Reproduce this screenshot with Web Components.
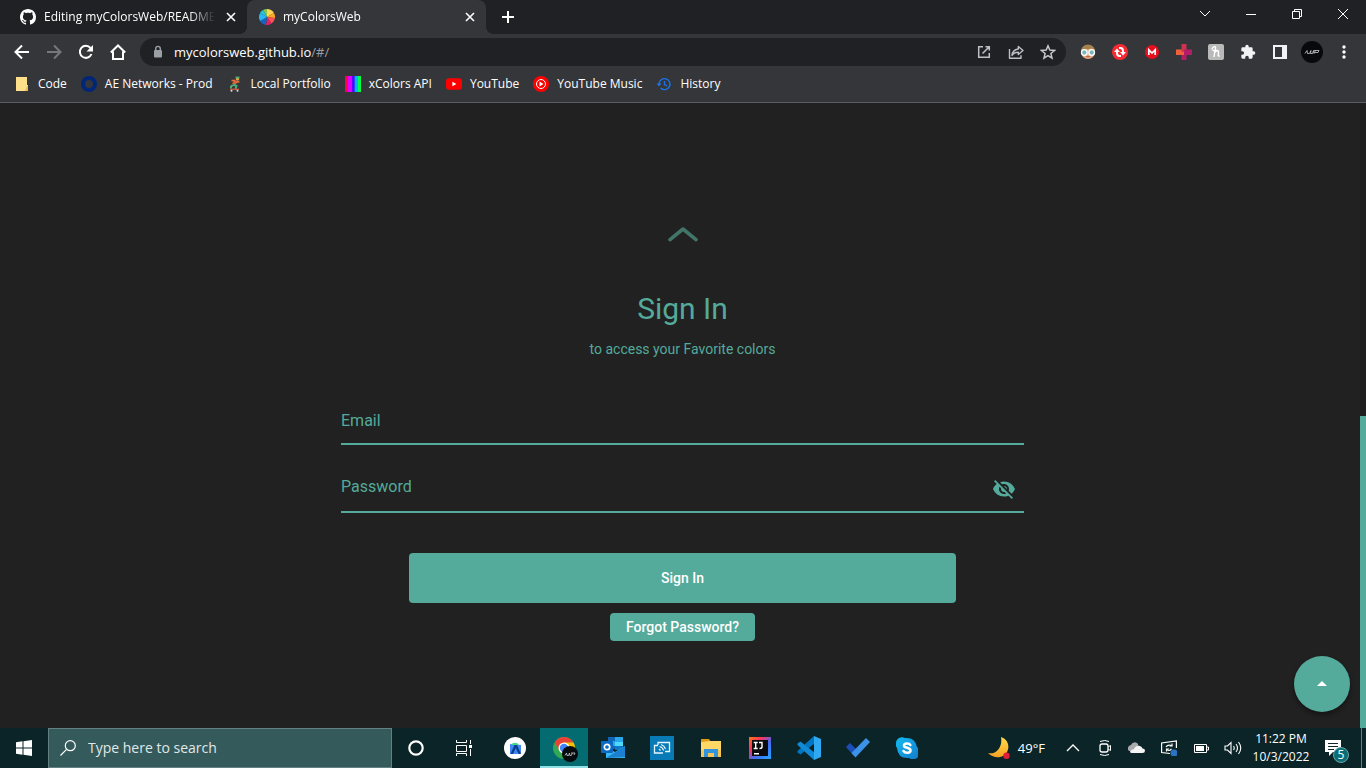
<!DOCTYPE html>
<html lang="en">
<head>
<meta charset="utf-8">
<title>myColorsWeb</title>
<style>
  html, body { height: 100%; margin: 0; }
  body { background: #212121; font-family: "Open Sans", "Noto Sans", sans-serif; font-size: 12px; color: #fff; overflow: hidden; }
</style>
</head>
<body>
<desktop-screen></desktop-screen>
<script>
const ICONS = {
  github: ['0 0 16 16', '<path fill="#fff" d="M8 0C3.58 0 0 3.58 0 8c0 3.54 2.29 6.53 5.47 7.59.4.07.55-.17.55-.38 0-.19-.01-.82-.01-1.49-2.01.37-2.53-.49-2.69-.94-.09-.23-.48-.94-.82-1.13-.28-.15-.68-.52-.01-.53.63-.01 1.08.58 1.23.82.72 1.21 1.87.87 2.33.66.07-.52.28-.87.51-1.07-1.78-.2-3.64-.89-3.64-3.95 0-.87.31-1.59.82-2.15-.08-.2-.36-1.02.08-2.12 0 0 .67-.21 2.2.82.64-.18 1.32-.27 2-.27s1.36.09 2 .27c1.53-1.04 2.2-.82 2.2-.82.44 1.1.16 1.92.08 2.12.51.56.82 1.27.82 2.15 0 3.07-1.87 3.75-3.65 3.95.29.25.54.73.54 1.48 0 1.07-.01 1.93-.01 2.2 0 .21.15.46.55.38A8.01 8.01 0 0 0 16 8c0-4.42-3.58-8-8-8z"/>'],
  wheel: ['-8 -8 16 16', '<g><path fill="#8bc34a" d="M0 0L-4-6.9A8 8 0 0 1 0-8z"/><path fill="#ffd54f" d="M0 0V-8A8 8 0 0 1 6.9-4z"/><path fill="#ffa726" d="M0 0L6.9-4A8 8 0 0 1 8 1z"/><path fill="#ff5252" d="M0 0L8 1A8 8 0 0 1 4.5 6.6z"/><path fill="#e91e63" d="M0 0L4.5 6.6A8 8 0 0 1-1 8z"/><path fill="#1565c0" d="M0 0L-1 8A8 8 0 0 1-6.9 4z"/><path fill="#29b6f6" d="M0 0L-6.9 4A8 8 0 0 1-6.9-4z"/><path fill="#26c6da" d="M0 0L-6.9-4A8 8 0 0 1-4-6.9z"/></g>'],
  close: ['0 0 16 16', '<path stroke="#fff" stroke-width="1.6" d="M4 4l8 8M12 4l-8 8"/>'],
  plus: ['0 0 16 16', '<path stroke="#fff" stroke-width="2" d="M8 2v12M2 8h12"/>'],
  winmenu: ['0 0 16 16', '<path fill="none" stroke="#fff" d="M3 5l5 5 5-5"/>'],
  winmin: ['0 0 16 16', '<path stroke="#fff" d="M3 8.5h10"/>'],
  winmax: ['0 0 16 16', '<path fill="none" stroke="#fff" d="M3.500 5.500h7v7h-7zM5.500 5.500v-2h7v7h-2"/>'],
  winclose: ['0 0 16 16', '<path stroke="#fff" d="M3 3l10 10M13 3L3 13"/>'],
  back: ['0 0 16 16', '<path fill="none" stroke="#fff" stroke-width="2" d="M15 8H2M8 1.500L1.500 8 8 14.500"/>'],
  forward: ['0 0 16 16', '<path fill="none" stroke="#77787b" stroke-width="2" d="M1 8h13M8 1.500L14.500 8 8 14.500"/>'],
  reload: ['0 0 16 16', '<path fill="none" stroke="#fff" stroke-width="2" d="M13.500 10A6 6 0 1 1 12.500 4"/><path fill="#fff" d="M15 1v6.500H8.500z"/>'],
  home: ['0 0 16 16', '<path fill="none" stroke="#fff" stroke-width="2" d="M.8 8.500L8 1.500l7.200 7M3 7.500V15h10V7.500"/>'],
  lock: ['0 0 16 16', '<rect x="4" y="6" width="8" height="7.500" rx="1" fill="#9aa0a6"/><path fill="none" stroke="#9aa0a6" stroke-width="1.400" d="M5.700 7V4.700a2.300 2.300 0 0 1 4.600 0V7"/>'],
  open: ['0 0 16 16', '<path fill="none" stroke="#bdc1c6" stroke-width="1.500" d="M7 2.700H2.700v10.600h10.600V9M9.500 2.700h3.800v3.800M13 3L6.500 9.500"/>'],
  share: ['0 0 16 16', '<path fill="none" stroke="#bdc1c6" stroke-width="1.400" stroke-linejoin="round" d="M1.500 5v9.300h11.500v-3M10.300 2.500L15 6.500l-4.700 4V8.200C7 8.200 5.200 9.200 4 11.500c.4-4 2.700-6 6.300-6.500z"/>'],
  star: ['0 0 16 16', '<path fill="none" stroke="#c4c7ca" stroke-width="1.500" d="M8 1.800l1.800 4.300 4.700.4-3.600 3 1.100 4.600L8 11.600l-4 2.500 1.100-4.600-3.600-3 4.700-.4z"/>'],
  glasses: ['0 0 16 16', '<circle cx="8" cy="8" r="7" fill="#e0ac83"/><path fill="#a5834f" d="M1 7.500a7 7 0 0 1 14 0l-3-3-6 1z"/><circle cx="4.300" cy="8.500" r="2.800" fill="#78b6c0" stroke="#fff" stroke-width="1.300"/><circle cx="11.700" cy="8.500" r="2.800" fill="#78b6c0" stroke="#fff" stroke-width="1.300"/><path stroke="#b85c38" d="M6 12.700h4"/>'],
  sync: ['0 0 16 16', '<circle cx="8" cy="8" r="8" fill="#f52b32"/><path fill="none" stroke="#fff" stroke-width="2" d="M9 12H7.500Q5 12 5 9V7M7 4h1.500Q11 4 11 7v2"/><path fill="#fff" d="M2 8l3-3.500L8 8zM8 8h6l-3 3.500z"/>'],
  mega: ['0 0 16 16', '<circle cx="8" cy="8" r="7" fill="#e60f1d"/><path fill="none" stroke="#fff" stroke-width="1.700" d="M4.800 11V5.800L8 9l3.200-3.200V11"/>'],
  cross: ['0 0 16 16', '<path fill="#f0603a" d="M0 5.500h8V11H0z"/><path fill="#cf334d" d="M5.500 0h5v8h-5z"/><path fill="#b51c68" d="M8 5.500h8V11h-5.500v5h-5v-5H8z"/>'],
  honey: ['0 0 16 16', '<rect width="16" height="16" rx="2" fill="#b9b9b9"/><path fill="none" stroke="#fff" stroke-width="1.400" stroke-linecap="round" d="M4 5c1-2.500 4-3.500 3.500-1L6 12.500M6.500 9c1.500-3 4.500-3 4 0-.3 1.500-1 3.500.8 3M5 6.500h5"/>'],
  puzzle: ['0 0 24 24', '<path fill="#f1f3f4" d="M20.500 11H19V7a2 2 0 0 0-2-2h-4V3.500a2.500 2.500 0 0 0-5 0V5H4a2 2 0 0 0-2 2v3.800h1.500a2.700 2.700 0 0 1 0 5.400H2V20a2 2 0 0 0 2 2h3.800v-1.500a2.700 2.700 0 0 1 5.400 0V22H17a2 2 0 0 0 2-2v-4h1.500a2.500 2.500 0 0 0 0-5z"/>'],
  panel: ['0 0 16 16', '<path fill="#f1f3f4" fill-rule="evenodd" d="M1 1h14v14H1zM3 3v10h7V3z"/>'],
  avatar: ['0 0 22 22', '<circle cx="11" cy="11" r="11" fill="#07090c"/><path fill="none" stroke="#c9cccf" stroke-width=".8" d="M4 12.500l2-3 .5 3h2l1.500-3-.5 3h2l1-3 .5 3 1.500-3M13 9.500h5l-1 2h-3"/>'],
  more: ['0 0 16 16', '<g fill="#fff"><circle cx="8" cy="3" r="1.700"/><circle cx="8" cy="8" r="1.700"/><circle cx="8" cy="13" r="1.700"/></g>'],
  folder: ['0 0 16 16', '<path fill="#ffe08a" d="M2 1h11v8h1v6H2z"/><path fill="#ebbd4d" d="M13 10h1v5h-3z"/>'],
  ring: ['0 0 16 16', '<circle cx="8" cy="8" r="6" fill="none" stroke="#002677" stroke-width="4"/>'],
  skater: ['0 0 16 16', '<circle cx="10.500" cy="3" r="1.700" fill="#e8a33f"/><path stroke="#e35b38" stroke-width="3.400" d="M9 4.500L6.500 8.500"/><path stroke="#4cae74" stroke-width="1.800" d="M8.500 1.500h4"/><path fill="none" stroke="#e8733f" stroke-width="1.400" d="M8 4.500H4.500M9 6.500l3.500-1"/><path fill="none" stroke="#4cae74" stroke-width="2" d="M6.500 8.500l3 1.500-1 3M6 9l-2 1.500v2"/><path stroke="#c15442" stroke-width="1.400" d="M3 13.300h9"/><circle cx="4.500" cy="14.800" r="1" fill="#ddd"/><circle cx="10.500" cy="14.800" r="1" fill="#ddd"/>'],
  bars: ['0 0 16 16', '<path fill="#ff0050" d="M0 0h3v16H0z"/><path fill="#e000ff" d="M3 0h4v16H3z"/><path fill="#5a00ff" d="M7 0h2v16H7z"/><path fill="#2848ff" d="M9 0h1v16H9z"/><path fill="#00b4ff" d="M10 0h3v16h-3z"/><path fill="#00ff48" d="M13 0h3v16h-3z"/>'],
  youtube: ['0 0 16 16', '<rect y="2.300" width="16" height="11.400" rx="3" fill="#f00"/><path fill="#fff" d="M6.400 5.700v4.600l4-2.300z"/>'],
  ytmusic: ['0 0 16 16', '<circle cx="8" cy="8" r="8" fill="#f00"/><circle cx="8" cy="8" r="4.500" fill="none" stroke="#fff"/><path fill="#fff" d="M6.500 5.500v5L10.500 8z"/>'],
  history: ['0 0 16 16', '<path fill="none" stroke="#1a73e8" stroke-width="1.400" d="M3 8a5.500 5.500 0 1 1 1.600 4M8.500 5v3.500l2.500 1.500"/><path fill="#1a73e8" d="M.5 7.500h5L3 10.500z"/>'],
  arrow: ['0 0 30 15', '<path fill="none" stroke="#427468" stroke-width="3.600" stroke-linecap="round" stroke-linejoin="round" d="M2 12.600L15 2l13 10.600"/>'],
  eyeoff: ['0 0 24 24', '<path fill="#54aa9b" d="M12 7c2.760 0 5 2.240 5 5 0 .65-.13 1.260-.36 1.830l2.920 2.920c1.510-1.260 2.700-2.890 3.430-4.750-1.730-4.390-6-7.500-11-7.500-1.400 0-2.740.25-3.980.7l2.160 2.160C10.740 7.130 11.350 7 12 7zM2 4.270l2.280 2.280.46.46C3.080 8.300 1.780 10.020 1 12c1.730 4.390 6 7.500 11 7.500 1.550 0 3.030-.3 4.380-.84l.42.42L19.730 22 21 20.730 3.270 3 2 4.270zM7.530 9.800l1.550 1.550c-.05.21-.08.43-.08.65 0 1.660 1.340 3 3 3 .22 0 .44-.03.65-.08l1.550 1.550c-.67.33-1.410.53-2.200.53-2.760 0-5-2.240-5-5 0-.79.2-1.530.53-2.200zm4.310-.78l3.150 3.150.02-.16c0-1.660-1.340-3-3-3l-.17.01z"/>'],
  caret: ['0 0 24 24', '<path fill="#fff" d="M7 14l5-5 5 5z"/>'],
  windows: ['0 0 16 16', '<path fill="#fff" d="M0 2.200l6.500-.9v6.200H0zM7.500 1.200L16 0v7.500H7.500zM0 8.500h6.500v6.200L0 13.800zM7.500 8.500H16V16l-8.500-1.200z"/>'],
  search: ['0 0 16 16', '<path fill="none" stroke="#fff" stroke-width="1.200" d="M.5 15.500L6.300 9.700"/><circle cx="10.300" cy="5.700" r="5" fill="none" stroke="#fff" stroke-width="1.200"/>'],
  cortana: ['0 0 16 16', '<circle cx="8" cy="8" r="6.700" fill="none" stroke="#fff" stroke-width="2.200"/>'],
  taskview: ['0 0 16 16', '<path fill="none" stroke="#fff" d="M.5 0v2.500h10V0M.5 5.500h10v6H.5zM.5 16v-2.500h10V16M14.500 0v4M14.500 9v7"/><path fill="#fff" d="M13 5h3v3h-3z"/>'],
  android: ['0 0 22 22', '<circle cx="11" cy="11" r="11" fill="#fff"/><path fill="#4285f4" d="M6 7l11 1v8l-4 1H6z"/><path fill="#3ddc84" d="M7 8a4.500 4 0 0 1 8 0z"/><path fill="#073f8c" d="M10.500 8h2.500L17 17h-2.500l-2.800-6L9 17H6.500z"/>'],
  chrome: ['-4 -5 30 30', '<circle cx="11" cy="11" r="11" fill="#34a853"/><path fill="#ea4335" d="M1.500 5.500A11 11 0 0 1 20.500 5.500L11 6 6.500 13.500z"/><path fill="#fbbc04" d="M20.500 5.500A11 11 0 0 1 11 22l4.500-8.500L11 5.500z"/><circle cx="11" cy="11" r="5.500" fill="#fff"/><circle cx="11" cy="11" r="4.200" fill="#4285f4"/><circle cx="17" cy="17" r="8" fill="#080b0d"/><path fill="none" stroke="#c5c9cb" stroke-width=".8" d="M12 18.500l1.500-2.500.5 2.500h1.500l1-2.500.3 2.500h1.500l1-2.500M18 16h4l-1 2"/>'],
  outlook: ['0 0 24 24', '<path fill="#1066b5" d="M7 1h14v12H7z"/><path fill="#28a8ea" d="M7 5h7v5H7zM14 1h8v5h-8z"/><path fill="#50d9ff" d="M14 6h8v5h-8z"/><path fill="#0f78c8" d="M14 10h8v4h-8z"/><path fill="#39b9f2" d="M5 22V11l9 5 10-6v12z"/><path fill="#1a80cf" d="M5 22l19-1V10z"/><rect y="5" width="12" height="12" rx="1" fill="#0a69c2"/><circle cx="6" cy="11" r="2.700" fill="none" stroke="#fff" stroke-width="1.700"/>'],
  connect: ['0 0 24 24', '<path fill="#087ab5" d="M0 0h24v24H0z"/><path fill="none" stroke="#e6f5fb" stroke-width="1.300" d="M8 9V6.500h11.500v9H15M8 9.500H4.500v7.500h8.500"/><path fill="none" stroke="#e6f5fb" stroke-width="1.200" d="M9 13l1.500 1.500M9.500 10.500a5 5 0 0 1 4 4M11 8.500a7 7 0 0 1 4.500 4.500"/>'],
  explorer: ['0 0 22 22', '<path fill="#e09a16" d="M1 2h8l2 3H1z"/><path fill="#ffd767" d="M1 5l9-1h11v16H1z"/><path fill="#f7c551" d="M1 13h20v7H1z"/><path fill="#3294dd" d="M4 12h14v8h-4v-4H8v4H4z"/>'],
  intellij: ['0 0 22 22', '<defs><linearGradient id="g" x1="0" y1="0" x2="1" y2="1"><stop offset="0" stop-color="#f97a12"/><stop offset=".3" stop-color="#fe315d"/><stop offset=".6" stop-color="#3f6df5"/><stop offset="1" stop-color="#27a6ff"/></linearGradient></defs><path fill="url(#g)" d="M0 0h22v22H0z"/><path d="M3 3h16v16H3z" fill="#0b0b0e"/><path fill="#fff" d="M5 16h5v1.500H5z"/><path fill="none" stroke="#fff" stroke-width="1.400" d="M4.700 5.500h4M6.700 5.500v6M4.700 11.500h4M10 5.500h3v4.500q0 1.500-2.500 1.500"/>'],
  vscode: ['0 0 24 24', '<path fill="#0076c2" d="M18 7L3.500 18.500.5 16.500V15L17 0z"/><path fill="#118ad5" d="M18 17L3.500 5.500.5 7.500V9L17 24z"/><path fill="#2fa9f2" d="M17 0l7 3v18l-7 3z"/>'],
  todo: ['0 0 24 24', '<path fill="#1b4fb8" d="M0 11l4-4 8 8-4 5z"/><path fill="#3c92e6" d="M20 2l4 4L9.500 21.500 5.500 17z"/>'],
  skype: ['0 0 22 22', '<defs><linearGradient id="s" x2="1" y2="1"><stop stop-color="#10bdf4"/><stop offset="1" stop-color="#1579c9"/></linearGradient></defs><path fill="url(#s)" d="M0 6a6 6 0 0 1 9-5q10-1 12 9a6 6 0 0 1-8 11Q2 22 1 11a6 6 0 0 1-1-5z"/><path fill="none" stroke="#fff" stroke-width="2.600" stroke-linecap="round" d="M14.300 8c-1-2-6.300-2.200-6.300.5 0 3.200 6.500 1.500 6.500 5 0 3-5.500 3-7 .5"/>'],
  moon: ['0 0 22 22', '<defs><linearGradient id="m" x2="0" y2="1"><stop stop-color="#ffdc4c"/><stop offset="1" stop-color="#f7a321"/></linearGradient></defs><path fill="url(#m)" d="M13 0c6 2 9 8 6.500 14S8 23.500 0 16C8 18 15 10 13 0z"/><circle cx="18.500" cy="18.800" r="3.200" fill="#e01e37"/>'],
  up: ['0 0 16 16', '<path fill="none" stroke="#fff" stroke-width="1.300" d="M2 11l6-6 6 6"/>'],
  meet: ['0 0 16 16', '<rect x="3" y="4" width="8" height="8" rx="2" fill="none" stroke="#fff" stroke-width="1.300"/><path fill="none" stroke="#fff" d="M11 7l2.500-1.500v5L11 9M3 1.500Q8-.5 12 1.500M3 14.500q5 2 9 0"/>'],
  cloud: ['0 0 18 16', '<path fill="#aaa" d="M1 11a3.500 3.500 0 0 1 2-6 4 4 0 0 1 7-1l1 7z"/><path fill="#f4f4f4" d="M2 11.500q1-2 4-2.500 2-4 6-3 2 .5 2.500 2.500 2.500 0 2.500 2.300 0 2.200-2.500 2.200H4q-2 0-2-1.500z"/>'],
  update: ['0 0 16 16', '<path fill="none" stroke="#fff" stroke-width="1.200" d="M9 13.500L.6 12.500V3L15.400 1v7"/><path fill="none" stroke="#fff" stroke-width="1.200" d="M5 7q2-3 6-1M11 3.500V6H8.500M5.500 11.500V9H8M5.500 9q2 3 5 0"/><circle cx="13" cy="13" r="3.500" fill="#2d73c4"/>'],
  battery: ['0 0 16 16', '<path fill="none" stroke="#fff" d="M1.500 4.500h12v8h-12zM14 7h1.500v3H14"/><path fill="#fff" d="M3 6h8v5H3z"/>'],
  volume: ['0 0 18 16', '<path fill="none" stroke="#fff" stroke-width="1.100" d="M1 6h2.500L7 2.500v11L3.500 10H1zM9.500 6q1.500 2 0 4M12 4q3 4 0 8M14.500 2q4.500 6 0 12"/>'],
  note: ['0 0 24 24', '<path fill="#fff" d="M0 4h16v12H8l-4 4v-4H0z"/><path stroke="#12282a" d="M3 7.500h10M3 10.500h10M3 13.500h6"/>']
};

class Base extends HTMLElement {
  connectedCallback() {
    if (!this.shadowRoot) this.attachShadow({ mode: 'open' }).innerHTML = `<style>
      *{box-sizing:border-box}
      button,input{font:inherit;color:inherit;background:none;border:0;padding:0;margin:0;outline:0}
      button{display:flex;align-items:center;justify-content:center}
      a{color:inherit;text-decoration:none}
      ${this.css()}</style>${this.html()}`;
  }
  attr(name) { return this.getAttribute(name) || ''; }
}

customElements.define('ui-icon', class extends Base {
  css() { const w = this.attr('w') || 16, h = this.attr('h') || w; return `:host{display:block;flex:none;width:${w}px;height:${h}px} svg{display:block;width:100%;height:100%}`; }
  html() { const [box, art] = ICONS[this.attr('name')]; return `<svg viewBox="${box}" aria-hidden="true">${art}</svg>`; }
});

customElements.define('icon-button', class extends Base {
  css() { return `:host{display:block;flex:none;width:32px;height:100%} button{width:100%;height:100%}`; }
  html() { return `<button aria-label="${this.attr('label')}"><ui-icon name="${this.attr('icon')}" w="${this.attr('w') || 16}"></ui-icon></button>`; }
});

customElements.define('browser-tab', class extends Base {
  css() { return `
    :host{display:flex;align-items:center;gap:8px;min-width:0;height:34px;padding:0 8px 0 12px;position:relative;box-sizing:border-box}
    :host([active]){background:#35363a;border-radius:8px 8px 0 0}
    :host([active])::before,:host([active])::after{content:"";position:absolute;bottom:0;width:8px;height:8px}
    :host([active])::before{right:100%;background:radial-gradient(circle at 0 0,#202124 8px,#35363a 8px)}
    :host([active])::after{left:100%;background:radial-gradient(circle at 100% 0,#202124 8px,#35363a 8px)}
    .title{flex:1;min-width:0;overflow:hidden;white-space:nowrap;line-height:20px;mask-image:linear-gradient(90deg,#000 85%,transparent)}
    icon-button{width:16px}`; }
  html() { return `<ui-icon name="${this.attr('icon')}"></ui-icon><span class="title"><slot></slot></span><icon-button icon="close" label="Close tab"></icon-button>`; }
});

customElements.define('tab-strip', class extends Base {
  css() { return `:host{display:flex;background:#202124;height:34px;padding-left:8px}
    browser-tab{flex:0 1 239px} .add{width:28px;margin-left:8px}
    .win{display:flex;margin-left:auto;height:28px} .win icon-button{width:46px}`; }
  html() { return `<browser-tab icon="github">Editing myColorsWeb/README.md</browser-tab>
    <browser-tab icon="wheel" active>myColorsWeb</browser-tab>
    <icon-button class="add" icon="plus" label="New tab"></icon-button>
    <div class="win"><icon-button icon="winmenu" label="Search tabs"></icon-button><icon-button icon="winmin" label="Minimize"></icon-button><icon-button icon="winmax" label="Restore"></icon-button><icon-button icon="winclose" label="Close"></icon-button></div>`; }
});

customElements.define('tool-bar', class extends Base {
  css() { return `:host{display:flex;align-items:center;background:#35363a;height:36px;padding:0 6px}
    .url{flex:1;display:flex;align-items:center;height:28px;margin:0 6px 0 6px;padding:0 2px 0 10px;background:#202124;border-radius:14px;font-size:13px}
    input{field-sizing:content;margin-left:8px;line-height:20px} .path{color:#9aa0a6;flex:1;line-height:20px}`; }
  html() {
    const b = (icon, label, w) => `<icon-button icon="${icon}" label="${label}" w="${w || 16}"></icon-button>`;
    return b('back', 'Back') + b('forward', 'Forward') + b('reload', 'Reload') + b('home', 'Home') +
    `<div class="url"><ui-icon name="lock"></ui-icon><input aria-label="Address" value="mycolorsweb.github.io"><span class="path">/#/</span>${b('open', 'Open in app')}${b('share', 'Share')}${b('star', 'Bookmark this page')}</div>` +
    b('glasses', 'Reader') + b('sync', 'Sync') + b('mega', 'Mega') + b('cross', 'Health') + b('honey', 'Honey') + b('puzzle', 'Extensions') + b('panel', 'Side panel') + b('avatar', 'Profile', 22) + b('more', 'Menu'); }
});

customElements.define('book-mark', class extends Base {
  css() { return `:host{display:block} a{display:flex;align-items:center;gap:8px;white-space:nowrap;line-height:20px}`; }
  html() { return `<a href="#"><ui-icon name="${this.attr('icon')}"></ui-icon><slot></slot></a>`; }
});
customElements.define('bookmark-bar', class extends Base {
  css() { return `:host{display:flex;align-items:center;gap:14px;height:33px;padding:0 14px 4px;background:#35363a;border-bottom:1px solid #5d5e62;box-sizing:border-box}`; }
  html() { return [['folder', 'Code'], ['ring', 'AE Networks - Prod'], ['skater', 'Local Portfolio'], ['bars', 'xColors API'], ['youtube', 'YouTube'], ['ytmusic', 'YouTube Music'], ['history', 'History']].map(([i, t]) => `<book-mark icon="${i}">${t}</book-mark>`).join(''); }
});

customElements.define('line-field', class extends Base {
  css() { return `:host{display:flex;align-items:center;height:50px;box-sizing:border-box;border-bottom:2px solid #54aa9b;font-size:16px;color:#54aa9b}
    input{flex:1;min-width:0;margin-left:8px}`; }
  html() { return `<label for="f">${this.attr('label')}</label><input id="f" type="${this.attr('type')}"><slot></slot>`; }
});
customElements.define('solid-button', class extends Base {
  css() { return `:host{display:block} button{width:100%;height:100%;padding:0 16px;background:#54aa9b;color:#fff;border-radius:4px;font-weight:500;white-space:nowrap}`; }
  html() { return `<button><slot></slot></button>`; }
});
customElements.define('sign-in-page', class extends Base {
  css() { return `:host{display:flex;flex:1;min-height:0;position:relative;background:#212121;font:14px/20px Roboto,sans-serif;color:#54aa9b}
    main{flex:1;display:flex;flex-direction:column;align-items:center;padding:124px 0 0 5px}
    h1{margin:47px 0 0;font-size:30px;line-height:40px;font-weight:400} p{margin:10px 0 40px}
    line-field{width:50vw} .email{height:46px} .pass{margin-top:18px} .pass icon-button{width:40px;padding-top:4px;box-sizing:border-box}
    .go{width:40vw;height:50px;margin:40px 0 10px} .forgot{height:28px}
    .scroll{width:6px;background:#1e1e1e;display:flex;flex-direction:column;justify-content:flex-end} .scroll i{height:50%;background:#54aa9b}
    .fab{position:absolute;right:16px;bottom:16px;width:56px;height:56px;border-radius:50%;background:#54aa9b;box-shadow:0 3px 5px #0006}`; }
  html() { return `<main><ui-icon name="arrow" w="30" h="15"></ui-icon><h1>Sign In</h1><p>to access your Favorite colors</p>
    <line-field class="email" label="Email" type="email"></line-field>
    <line-field class="pass" label="Password" type="password"><icon-button icon="eyeoff" label="Show password" w="24"></icon-button></line-field>
    <solid-button class="go">Sign In</solid-button><solid-button class="forgot">Forgot Password?</solid-button></main>
    <div class="scroll"><i></i></div>
    <icon-button class="fab" icon="caret" label="Back to top" w="24"></icon-button>`; }
});

customElements.define('task-bar', class extends Base {
  css() { return `:host{display:flex;height:40px;background:#0b2427}
    .start{width:48px} .task{width:48px}
    .search{flex:0 1 344px;display:flex;align-items:center;gap:12px;padding:0 11px;background:#355a5b;border:1px solid #648081;font-size:14px}
    input{flex:1;min-width:0;line-height:20px} input::placeholder{color:#e0e8e8;opacity:1}
    .apps{display:flex;gap:1px;margin-left:3px} .apps icon-button{width:48px} .apps .on{background:#046b70;border-bottom:2px solid #8fe0e4;box-sizing:border-box}
    .tray{display:flex;margin-left:auto}
    .weather{gap:8px;padding-right:12px;font-size:13px}
    .clock{width:64px;flex-direction:column;line-height:18px;white-space:nowrap}
    .notes{width:48px;position:relative}
    .badge{position:absolute;left:20px;top:19px;width:16px;height:16px;border-radius:50%;background:#0b6d76;border:1px solid #6fa3a7;line-height:14px;text-align:center}
    .desk{width:5px;border-left:1px solid #6d7d7e}`; }
  html() { return `<icon-button class="start" icon="windows" label="Start"></icon-button>
    <div class="search"><ui-icon name="search"></ui-icon><input type="text" aria-label="Search" placeholder="Type here to search"></div>
    <icon-button class="task" icon="cortana" label="Cortana"></icon-button><icon-button class="task" icon="taskview" label="Task view"></icon-button>
    <div class="apps">${[['android', 22], ['chrome', 30], ['outlook', 24], ['connect', 24], ['explorer', 22], ['intellij', 22], ['vscode', 24], ['todo', 24], ['skype', 22]].map(([n, w]) => `<icon-button ${n === 'chrome' ? 'class="on"' : ''} icon="${n}" w="${w}" label="${n}"></icon-button>`).join('')}</div>
    <div class="tray"><button class="weather"><ui-icon name="moon" w="22"></ui-icon>49°F</button>
    ${[['up', 16], ['meet', 16], ['cloud', 18], ['update', 16], ['battery', 16], ['volume', 18]].map(([n, w]) => `<icon-button icon="${n}" w="${w}" label="${n}"></icon-button>`).join('')}
    <button class="clock"><span>11:22 PM</span><span>10/3/2022</span></button>
    <button class="notes" aria-label="Notifications"><ui-icon name="note" w="24"></ui-icon><span class="badge">5</span></button>
    <button class="desk" aria-label="Show desktop"></button></div>`; }
});

customElements.define('desktop-screen', class extends Base {
  css() { return `:host{display:flex;flex-direction:column;min-height:100vh}`; }
  html() { return `<tab-strip></tab-strip><tool-bar></tool-bar><bookmark-bar></bookmark-bar><sign-in-page></sign-in-page><task-bar></task-bar>`; }
});
</script>
</body>
</html>
